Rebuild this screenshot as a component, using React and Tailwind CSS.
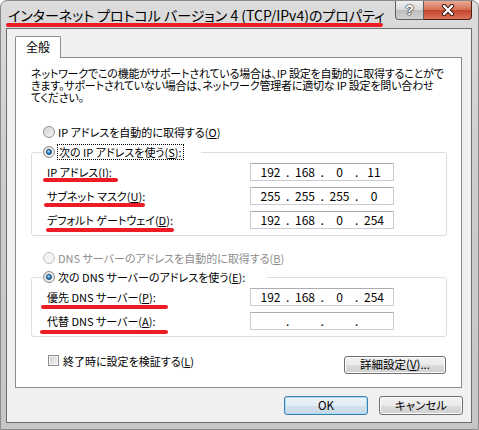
import { Fragment } from "react";

const FONT =
  "font-['Noto_Sans_CJK_JP',sans-serif] [font-feature-settings:'palt']";

function Radio({ checked, disabled }) {
  return (
    <span
      className={`flex h-[12px] w-[12px] flex-none items-center justify-center rounded-full border ${
        disabled
          ? "border-[#c6c6c6] bg-[#f3f3f3]"
          : "border-[#8a8a8a] bg-[linear-gradient(135deg,#cdcdcd,#f8f8f8)] shadow-[inset_0_0_0_1px_#efefef]"
      }`}
    >
      {checked && (
        <span className="h-[6px] w-[6px] rounded-full border border-[#16466f] bg-[radial-gradient(circle_at_35%_30%,#bdeaff,#2a88d6_55%,#0f4d8a)]" />
      )}
    </span>
  );
}

function Mn({ children }) {
  return <u className="underline-offset-[1px]">{children}</u>;
}

function IpField({ parts }) {
  return (
    <div className="flex h-[18px] w-[144px] flex-none items-center border border-[#c9ccd2] border-t-[#abadb3] bg-white pl-[4px] text-[12px] leading-[16px]">
      {parts.map((p, i) => (
        <Fragment key={i}>
          <span className="w-[31px] text-center">{p}</span>
          {i < 3 && (
            <span className="flex w-[3.5px] justify-center">.</span>
          )}
        </Fragment>
      ))}
    </div>
  );
}

function Row({ label, parts }) {
  return (
    <div className="flex h-[24px] items-center pl-[15px]">
      <span className="w-[203px] flex-none whitespace-nowrap">{label}</span>
      <IpField parts={parts} />
    </div>
  );
}

function Button({ children, primary, className = "" }) {
  return (
    <button
      type="button"
      className={`flex items-center justify-center rounded-[3px] border text-[11.5px] leading-none ${
        primary
          ? "border-[#3c7fb1] bg-[linear-gradient(to_bottom,#eef5fa,#e2ecf4_50%,#d3e1ec_50%,#c9d9e6)] shadow-[inset_0_0_0_1px_#a8dcf5]"
          : "border-[#707070] bg-[linear-gradient(to_bottom,#f2f2f2,#ebebeb_50%,#dddddd_50%,#cfcfcf)] shadow-[inset_0_0_0_1px_#fbfbfb]"
      } ${className}`}
    >
      {children}
    </button>
  );
}

const marks = [
  "left-[5px] top-[22px] w-[377px]",
  "left-[42px] top-[177px] w-[75px]",
  "left-[43px] top-[202px] w-[101px]",
  "left-[45px] top-[227px] w-[128px]",
  "left-[40px] top-[304px] w-[127px]",
  "left-[39px] top-[329px] w-[128px]",
];

export default function App() {
  return (
    <div
      className={`relative flex h-[430px] w-[479px] flex-col overflow-hidden rounded-t-[7px] border border-[#8a8a8a] bg-[linear-gradient(to_bottom,#dcdcdc,#cdcdcd_40%,#c6c6c6)] text-black ${FONT}`}
    >
      {/* title bar */}
      <div className="flex h-[27px] flex-none items-center">
        <div className="flex-1 whitespace-nowrap pl-[7px] text-[14px] leading-none">
          インターネット プロトコル バージョン 4 (TCP/IPv4)のプロパティ
        </div>
        <div className="mr-[6px] flex h-[19px] self-start">
          <div className="flex w-[29px] items-center justify-center rounded-bl-[4px] border border-t-0 border-[#5e5e5e] bg-[linear-gradient(to_bottom,#efefef,#d9d9d9_50%,#bcbcbc_50%,#d2d2d2)] font-['Liberation_Sans',sans-serif] text-[14px] font-bold leading-none text-white [text-shadow:0_0_1px_#222,0_0_1px_#222,0_0_2px_#333]">
            ?
          </div>
          <div className="flex w-[48px] items-center justify-center rounded-br-[4px] border border-l-0 border-t-0 border-[#4f1f16] bg-[linear-gradient(to_bottom,#eaa995,#d56d52_50%,#c1442b_50%,#d97356)]">
            <svg width="14" height="12" viewBox="0 0 14 12">
              <path
                d="M3 2 L11 10 M11 2 L3 10"
                stroke="#3a1a14"
                strokeWidth="4.2"
                strokeLinecap="round"
              />
              <path
                d="M3 2 L11 10 M11 2 L3 10"
                stroke="#ffffff"
                strokeWidth="2.4"
                strokeLinecap="round"
              />
            </svg>
          </div>
        </div>
      </div>

      {/* client area */}
      <div className="mb-[6px] ml-[5px] mr-[6px] flex flex-1 flex-col border border-[#6e6e6e] bg-[#f0f0f0]">
        <div className="ml-[8px] mt-[7px] flex">
          <div className="relative z-10 -mb-px flex h-[22px] w-[46px] items-center justify-center rounded-t-[2px] border border-b-0 border-[#898c95] bg-white pb-[1px] text-[12px] leading-none">
            全般
          </div>
        </div>

        <div className="ml-[8px] mr-[9px] flex flex-col border border-[#898c95] bg-white pb-[13px] text-[11px] leading-[16px]">
          <div className="whitespace-nowrap pl-[15px] pt-[9px] leading-[12px] tracking-[-0.2px]">
            <div>
              ネットワークでこの機能がサポートされている場合は、IP
              設定を自動的に取得することがで
            </div>
            <div>
              きます。サポートされていない場合は、ネットワーク管理者に適切な IP
              設定を問い合わせ
            </div>
            <div>てください。</div>
          </div>

          <div className="mt-[21px] flex h-[16px] items-center pl-[27px]">
            <Radio />
            <span className="ml-[3px] whitespace-nowrap">
              IP アドレスを自動的に取得する(<Mn>O</Mn>)
            </span>
          </div>

          <fieldset className="ml-[15px] mt-[4px] w-[416px] rounded-[3px] border border-[#d5dfe5] pb-[3px]">
            <legend className="ml-[10px] flex h-[16px] items-center pl-[1px] pr-[17px]">
              <Radio checked />
              <span className="ml-[2px] whitespace-nowrap border border-dotted border-black px-[1px] leading-[14px]">
                次の IP アドレスを使う(<Mn>S</Mn>):
              </span>
            </legend>
            <Row
              label={
                <>
                  IP アドレス(<Mn>I</Mn>):
                </>
              }
              parts={["192", "168", "0", "11"]}
            />
            <Row
              label={
                <>
                  サブネット マスク(<Mn>U</Mn>):
                </>
              }
              parts={["255", "255", "255", "0"]}
            />
            <Row
              label={
                <>
                  デフォルト ゲートウェイ(<Mn>D</Mn>):
                </>
              }
              parts={["192", "168", "0", "254"]}
            />
          </fieldset>

          <div className="mt-[14px] flex h-[16px] items-center pl-[27px] text-[#8d8d8d]">
            <Radio disabled />
            <span className="ml-[3px] whitespace-nowrap">
              DNS サーバーのアドレスを自動的に取得する(<Mn>B</Mn>)
            </span>
          </div>

          <fieldset className="ml-[15px] mt-[3px] w-[416px] rounded-[3px] border border-[#d5dfe5] pb-[3px]">
            <legend className="ml-[10px] flex h-[16px] items-center pl-[1px] pr-[22px]">
              <Radio checked />
              <span className="ml-[3px] whitespace-nowrap">
                次の DNS サーバーのアドレスを使う(<Mn>E</Mn>):
              </span>
            </legend>
            <Row
              label={
                <>
                  優先 DNS サーバー(<Mn>P</Mn>):
                </>
              }
              parts={["192", "168", "0", "254"]}
            />
            <Row
              label={
                <>
                  代替 DNS サーバー(<Mn>A</Mn>):
                </>
              }
              parts={["", "", "", ""]}
            />
          </fieldset>

          <div className="mt-[19px] flex items-start pl-[32px] pr-[15px]">
            <div className="-mt-px flex h-[11px] items-center">
              <span className="h-[11px] w-[11px] flex-none border border-[#8e8f8f] bg-[linear-gradient(135deg,#cfcfcf,#f5f5f5)] shadow-[inset_0_0_0_1px_#f4f4f4]" />
              <span className="ml-[4px] whitespace-nowrap">
                終了時に設定を検証する(<Mn>L</Mn>)
              </span>
            </div>
            <Button className="ml-auto h-[18px] w-[102px]">
              詳細設定(<Mn>V</Mn>)...
            </Button>
          </div>
        </div>

        <div className="mr-[8px] mt-[8px] flex justify-end gap-[11px]">
          <Button primary className="h-[19px] w-[84px]">
            OK
          </Button>
          <Button className="h-[19px] w-[84px]">キャンセル</Button>
        </div>
      </div>

      {/* red annotation marks */}
      {marks.map((m, i) => (
        <span
          key={i}
          className={`pointer-events-none absolute h-[4px] rounded-full bg-[#ed1c24] ${m}`}
        />
      ))}
    </div>
  );
}
